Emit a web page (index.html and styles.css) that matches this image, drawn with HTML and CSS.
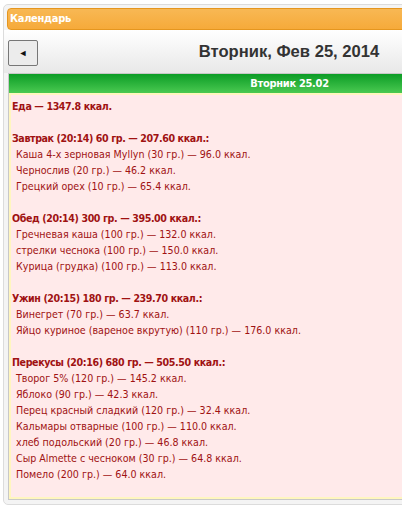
FILE: index.html
```html
<!DOCTYPE html>
<html lang="ru">
<head>
    <meta charset="UTF-8">
    <title>Календарь</title>
    <link rel="stylesheet" href="styles.css">
</head>
<body>
    <div class="calendar">
        <div class="calendar-header">Календарь</div>
        <div class="calendar-body">
            <div class="day-nav">
                <button class="prev-btn" type="button">&#9668;</button>
                <h2 class="day-title">Вторник, Фев 25, 2014</h2>
            </div>
            <div class="day-panel">
                <div class="day-bar">Вторник 25.02</div>
                <div class="day-content">
                    <p class="meal">Еда — 1347.8 ккал.</p>
                    <p class="blank"></p>
                    <p class="meal">Завтрак (20:14) 60 гр. — 207.60 ккал.:</p>
                    <p class="item">Каша 4-х зерновая Myllyn (30 гр.) — 96.0 ккал.</p>
                    <p class="item">Чернослив (20 гр.) — 46.2 ккал.</p>
                    <p class="item">Грецкий орех (10 гр.) — 65.4 ккал.</p>
                    <p class="blank"></p>
                    <p class="meal">Обед (20:14) 300 гр. — 395.00 ккал.:</p>
                    <p class="item">Гречневая каша (100 гр.) — 132.0 ккал.</p>
                    <p class="item">стрелки чеснока (100 гр.) — 150.0 ккал.</p>
                    <p class="item">Курица (грудка) (100 гр.) — 113.0 ккал.</p>
                    <p class="blank"></p>
                    <p class="meal">Ужин (20:15) 180 гр. — 239.70 ккал.:</p>
                    <p class="item">Винегрет (70 гр.) — 63.7 ккал.</p>
                    <p class="item">Яйцо куриное (вареное вкрутую) (110 гр.) — 176.0 ккал.</p>
                    <p class="blank"></p>
                    <p class="meal">Перекусы (20:16) 680 гр. — 505.50 ккал.:</p>
                    <p class="item">Творог 5% (120 гр.) — 145.2 ккал.</p>
                    <p class="item">Яблоко (90 гр.) — 42.3 ккал.</p>
                    <p class="item">Перец красный сладкий (120 гр.) — 32.4 ккал.</p>
                    <p class="item">Кальмары отварные (100 гр.) — 110.0 ккал.</p>
                    <p class="item">хлеб подольский (20 гр.) — 46.8 ккал.</p>
                    <p class="item">Сыр Almette с чесноком (30 гр.) — 64.8 ккал.</p>
                    <p class="item">Помело (200 гр.) — 64.0 ккал.</p>
                </div>
            </div>
        </div>
    </div>
</body>
</html>
```

FILE: styles.css
```css
body {
    margin: 4px 0 0 3px;
    font-family: 'DejaVu Sans Condensed', 'DejaVu Sans', sans-serif;
    font-stretch: condensed;
    font-size: 10.6px;
    background: #fff;
    overflow: hidden;
}
.calendar {
    width: 564px;
    border: 1px solid #dcdcdc;
    border-radius: 5px;
    padding: 3px;
    background: #f4f4f4;
}
.calendar-header {
    height: 20px;
    line-height: 20px;
    padding-left: 2px;
    border: 1px solid #e5961f;
    border-radius: 4px;
    background: linear-gradient(#f8b854, #f6aa3a);
    color: #fff;
    font-size: 11px;
    font-weight: bold;
    letter-spacing: -0.3px;
}
.calendar-body {
    padding: 0 0 1px 0;
}
.day-nav {
    display: flex;
    align-items: center;
    height: 43px;
    background: linear-gradient(#ffffff, #e8e8e8);
    margin: 0 -3px;
    padding: 0 4px;
}
.prev-btn {
    width: 30px;
    height: 26px;
    margin-top: 2px;
    padding: 0;
    border: 1px solid #777;
    border-radius: 2px;
    background: #ececec;
    color: #111;
    font-size: 9px;
    line-height: 24px;
}
.day-title {
    flex: 1;
    margin: 0;
    padding-right: 30px;
    font-family: 'Liberation Sans', Arial, sans-serif;
    font-stretch: normal;
    font-size: 16.6px;
    font-weight: bold;
    text-align: center;
    color: #333;
}
.day-panel {
    border: 1px solid #c8c8c8;
    margin-left: 1px;
}
.day-bar {
    height: 19px;
    line-height: 19px;
    background: linear-gradient(#0c9c26, #4ac951);
    color: #fff;
    font-size: 11px;
    font-weight: bold;
    letter-spacing: -0.3px;
    text-align: center;
}
.day-content {
    border: 2px solid #fff6bf;
    background: #ffeaea;
    padding: 3px 0 15px 1px;
    color: #a01212;
}
.day-content p {
    margin: 0;
    height: 16px;
    line-height: 16px;
    white-space: nowrap;
}
.meal {
    font-weight: bold;
    letter-spacing: -0.4px;
}
.item {
    padding-left: 4px;
}
```
